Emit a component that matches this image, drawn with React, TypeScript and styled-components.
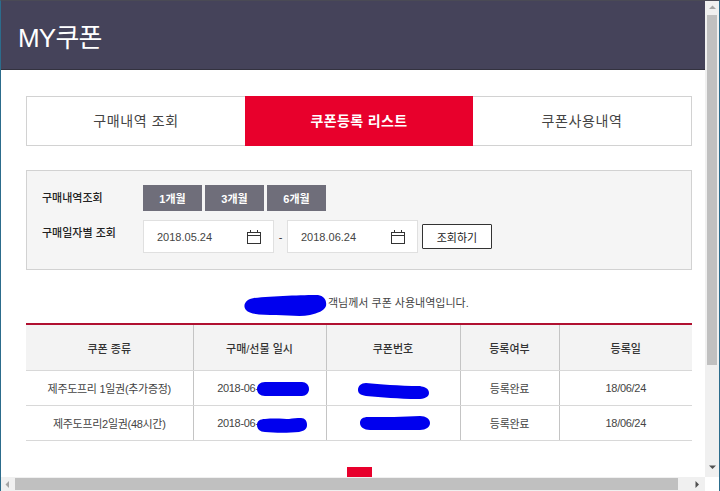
import React from 'react';
import styled, { createGlobalStyle } from 'styled-components';

const FONT = `"Liberation Sans", "Noto Sans CJK KR", sans-serif`;

const GlobalStyle = createGlobalStyle`
    html, body {
        margin: 0;
        padding: 0;
        background: #fff;
        overflow: hidden;
    }
`;

const Frame = styled.div`
    width: 720px;
    height: 491px;
    box-sizing: border-box;
    border-left: 1px solid #2c6c8c;
    border-right: 1px solid #2c6c8c;
    border-top: 1px solid #4a4a55;
    display: grid;
    grid-template-columns: 704px 14px;
    grid-template-rows: 476px 14px;
    overflow: hidden;
    font-family: ${FONT};
    color: #333;
`;

const Viewport = styled.div`
    overflow: hidden;
    background: #fff;
`;

const Header = styled.header`
    height: 69px;
    background: #45435a;
    display: flex;
    align-items: center;
    padding-left: 17px;
    box-sizing: border-box;
    border-bottom: 1px solid #33323f;
`;

const Title = styled.h1`
    margin: 0;
    font-size: 26px;
    font-weight: 400;
    letter-spacing: -0.8px;
    color: #fff;
`;

const Content = styled.main`
    padding: 26px 13px 0 25px;
`;

const Tabs = styled.div`
    display: grid;
    grid-template-columns: 218px 228px 218px;
    width: 666px;
    height: 50px;
    box-sizing: border-box;
    border: 1px solid #d2d2d2;
`;

const Tab = styled.div<{ $active?: boolean }>`
    display: flex;
    align-items: center;
    justify-content: center;
    margin: ${p => (p.$active ? '-1px 0' : '0')};
    padding-bottom: 2px;
    font-size: 14px;
    letter-spacing: ${p => (p.$active ? '0.4px' : '0.6px')};
    font-weight: ${p => (p.$active ? 700 : 400)};
    background: ${p => (p.$active ? '#e8002c' : '#fff')};
    color: ${p => (p.$active ? '#fff' : '#444')};
`;

const FilterBox = styled.section`
    margin-top: 24px;
    height: 100px;
    box-sizing: border-box;
    padding: 14px 15px 0;
    background: #f5f5f5;
    border: 1px solid #d2d2d2;
`;

const FilterRow = styled.div<{ $gap: number }>`
    display: flex;
    align-items: flex-start;
    margin-bottom: ${p => p.$gap}px;
`;

const FilterLabel = styled.div`
    width: 101px;
    flex: none;
    font-size: 11px;
    font-weight: 500;
    line-height: 26px;
    color: #222;
`;

const Periods = styled.div`
    display: flex;
    gap: 3px;
`;

const PeriodButton = styled.button`
    width: 59px;
    height: 26px;
    padding: 0;
    border: 0;
    background: #6f6e7a;
    color: #fff;
    font-family: ${FONT};
    font-size: 11px;
    font-weight: 700;
`;

const DateField = styled.div`
    width: 131px;
    height: 33px;
    box-sizing: border-box;
    padding: 0 12px 0 13px;
    display: flex;
    align-items: center;
    justify-content: space-between;
    background: #fff;
    border: 1px solid #e0e0e0;
    font-size: 11px;
    color: #444;
`;

const DateDash = styled.span`
    width: 13px;
    text-align: center;
    line-height: 34px;
    font-size: 11px;
`;

const SearchButton = styled.button`
    width: 70px;
    height: 25px;
    margin: 4px 0 0 4px;
    padding: 0;
    background: #fff;
    border: 1px solid #333;
    border-radius: 1px;
    color: #222;
    font-family: ${FONT};
    font-size: 11px;
`;

const Notice = styled.p`
    position: relative;
    margin: 26px 0 0;
    height: 14px;
    padding-left: 302px;
    font-size: 11px;
    line-height: 14px;
    color: #444;
`;

const Table = styled.table`
    margin-top: 13px;
    width: 666px;
    table-layout: fixed;
    border-collapse: collapse;
    border-top: 2px solid #b01030;
`;

const Th = styled.th`
    height: 45px;
    padding: 0;
    background: #f3f3f3;
    border-left: 1px solid #c4c4c4;
    border-bottom: 1px solid #d8d8d8;
    font-size: 11px;
    font-weight: 500;
    color: #333;
    &:first-child {
        border-left: 0;
    }
`;

const Td = styled.td`
    position: relative;
    height: 34px;
    padding: 0;
    text-align: center;
    background: #fff;
    border-left: 1px solid #c4c4c4;
    border-bottom: 1px solid #d8d8d8;
    font-size: 11px;
    letter-spacing: -0.3px;
    color: #444;
    &:first-child {
        border-left: 0;
    }
`;

const DatePrefix = styled.span`
    margin-right: 43px;
`;

const Scribble = styled.svg`
    position: absolute;
    overflow: visible;
    pointer-events: none;
`;

const Pagination = styled.div`
    display: flex;
    justify-content: center;
    margin: 26px 0 0 1px;
`;

const PageButton = styled.div`
    width: 25px;
    height: 25px;
    background: #e8002c;
    color: #fff;
    font-size: 11px;
    font-weight: 700;
    line-height: 28px;
    text-align: center;
`;

const ScrollTrack = styled.div<{ $horizontal?: boolean }>`
    display: flex;
    flex-direction: ${p => (p.$horizontal ? 'row' : 'column')};
    padding-bottom: ${p => (p.$horizontal ? '0' : '2px')};
    background: #f0f0f0;
`;

const ScrollArrow = styled.div`
    flex: none;
    width: 14px;
    height: 14px;
    display: flex;
    align-items: center;
    justify-content: center;
`;

const ScrollThumb = styled.div<{ $horizontal?: boolean }>`
    background: #c0c0c0;
    ${p => (p.$horizontal ? 'width: 663px; margin: 1px 0;' : 'height: 350px; margin: 0 2px;')}
`;

const ScrollSpacer = styled.div`
    flex: 1;
`;

const ScrollCorner = styled.div`
    background: #fff;
`;

const Arrow = ({ dir }: { dir: 'up' | 'down' | 'left' | 'right' }) => {
    const points = {
        up: '0,4 7,4 3.5,0.5',
        down: '0,0.5 7,0.5 3.5,4',
        left: '4,0 4,7 0.5,3.5',
        right: '0.5,0 0.5,7 4,3.5',
    }[dir];
    const color = dir === 'up' || dir === 'left' ? '#a4a4a4' : '#505050';
    return (
        <svg width="7" height="7" viewBox="0 0 7 7">
            <polygon points={points} fill={color} />
        </svg>
    );
};

const CalendarIcon = () => (
    <svg width="14" height="14" viewBox="0 0 14 14" fill="none" stroke="#333" strokeWidth="1">
        <rect x="0.5" y="2.5" width="13" height="11" />
        <path d="M0.5 5.5H13.5M3.5 0V3M10.5 0V3" />
    </svg>
);

interface Blot {
    left: number;
    top: number;
    width: number;
    height: number;
    d: string;
}

const Redaction = ({ left, top, width, height, d }: Blot) => (
    <Scribble style={{ left, top }} width={width} height={height} viewBox={`0 0 ${width} ${height}`}>
        <path d={d} fill="#0000ee" />
    </Scribble>
);

const COLUMNS = [167, 133, 134, 99, 133];

const ROWS: { name: string; date: string; status: string; dateBlot: Blot; codeBlot: Blot }[] = [
    {
        name: '제주도프리 1일권(추가증정)',
        date: '18/06/24',
        status: '등록완료',
        dateBlot: {
            left: 63,
            top: 11,
            width: 52,
            height: 14,
            d: 'M8 0H45C49 0 52 3 52 7C52 11 49 14 45 14H8C3 14 0 11 0 7C0 3 3 0 8 0Z',
        },
        codeBlot: {
            left: 31,
            top: 12,
            width: 71,
            height: 16,
            d: 'M8 0C22 1 40 3 62 3C66 4 71 5 71 10C71 14 66 16 60 16C40 16 24 14 8 13C2 12 0 10 0 7C0 3 3 0 8 0Z',
        },
    },
    {
        name: '제주도프리2일권(48시간)',
        date: '18/06/24',
        status: '등록완료',
        dateBlot: {
            left: 63,
            top: 12,
            width: 50,
            height: 14,
            d: 'M8 1C18 0 28 1 32 1C36 0 40 0 44 0C48 0 50 3 50 7C50 11 47 13 42 14C32 15 18 15 8 14C3 14 0 11 0 7C0 3 3 1 8 1Z',
        },
        codeBlot: {
            left: 33,
            top: 10,
            width: 70,
            height: 15,
            d: 'M8 1C24 1 44 1 60 0C66 0 70 3 70 7C70 11 66 14 60 14H10C4 14 0 11 0 7C0 3 3 1 8 1Z',
        },
    },
];

const App = () => (
    <>
        <GlobalStyle />
        <Frame>
            <Viewport>
                <Header>
                    <Title>MY쿠폰</Title>
                </Header>
                <Content>
                    <Tabs>
                        <Tab>구매내역 조회</Tab>
                        <Tab $active>쿠폰등록 리스트</Tab>
                        <Tab>쿠폰사용내역</Tab>
                    </Tabs>
                    <FilterBox>
                        <FilterRow $gap={9}>
                            <FilterLabel>구매내역조회</FilterLabel>
                            <Periods>
                                <PeriodButton>1개월</PeriodButton>
                                <PeriodButton>3개월</PeriodButton>
                                <PeriodButton>6개월</PeriodButton>
                            </Periods>
                        </FilterRow>
                        <FilterRow $gap={0}>
                            <FilterLabel>구매일자별 조회</FilterLabel>
                            <DateField>
                                2018.05.24
                                <CalendarIcon />
                            </DateField>
                            <DateDash>-</DateDash>
                            <DateField>
                                2018.06.24
                                <CalendarIcon />
                            </DateField>
                            <SearchButton>조회하기</SearchButton>
                        </FilterRow>
                    </FilterBox>
                    <Notice>
                        <Redaction
                            left={218}
                            top={-1}
                            width={83}
                            height={22}
                            d="M10 3C28 1 60 0 74 0C80 1 83 5 82 11C80 16 74 18 66 20C56 22 44 20 32 20C20 20 6 20 2 15C-2 10 2 4 10 3Z"
                        />
                        객님께서 쿠폰 사용내역입니다.
                    </Notice>
                    <Table>
                        <colgroup>
                            {COLUMNS.map((w, i) => (
                                <col key={i} style={{ width: w }} />
                            ))}
                        </colgroup>
                        <thead>
                            <tr>
                                <Th>쿠폰 종류</Th>
                                <Th>구매/선물 일시</Th>
                                <Th>쿠폰번호</Th>
                                <Th>등록여부</Th>
                                <Th>등록일</Th>
                            </tr>
                        </thead>
                        <tbody>
                            {ROWS.map(row => (
                                <tr key={row.name}>
                                    <Td>{row.name}</Td>
                                    <Td>
                                        <DatePrefix>2018-06-</DatePrefix>
                                        <Redaction {...row.dateBlot} />
                                    </Td>
                                    <Td>
                                        <Redaction {...row.codeBlot} />
                                    </Td>
                                    <Td>{row.status}</Td>
                                    <Td>{row.date}</Td>
                                </tr>
                            ))}
                        </tbody>
                    </Table>
                    <Pagination>
                        <PageButton>1</PageButton>
                    </Pagination>
                </Content>
            </Viewport>
            <ScrollTrack>
                <ScrollArrow>
                    <Arrow dir="up" />
                </ScrollArrow>
                <ScrollThumb />
                <ScrollSpacer />
                <ScrollArrow>
                    <Arrow dir="down" />
                </ScrollArrow>
            </ScrollTrack>
            <ScrollTrack $horizontal>
                <ScrollArrow>
                    <Arrow dir="left" />
                </ScrollArrow>
                <ScrollThumb $horizontal />
                <ScrollSpacer />
                <ScrollArrow>
                    <Arrow dir="right" />
                </ScrollArrow>
            </ScrollTrack>
            <ScrollCorner />
        </Frame>
    </>
);

export default App;
